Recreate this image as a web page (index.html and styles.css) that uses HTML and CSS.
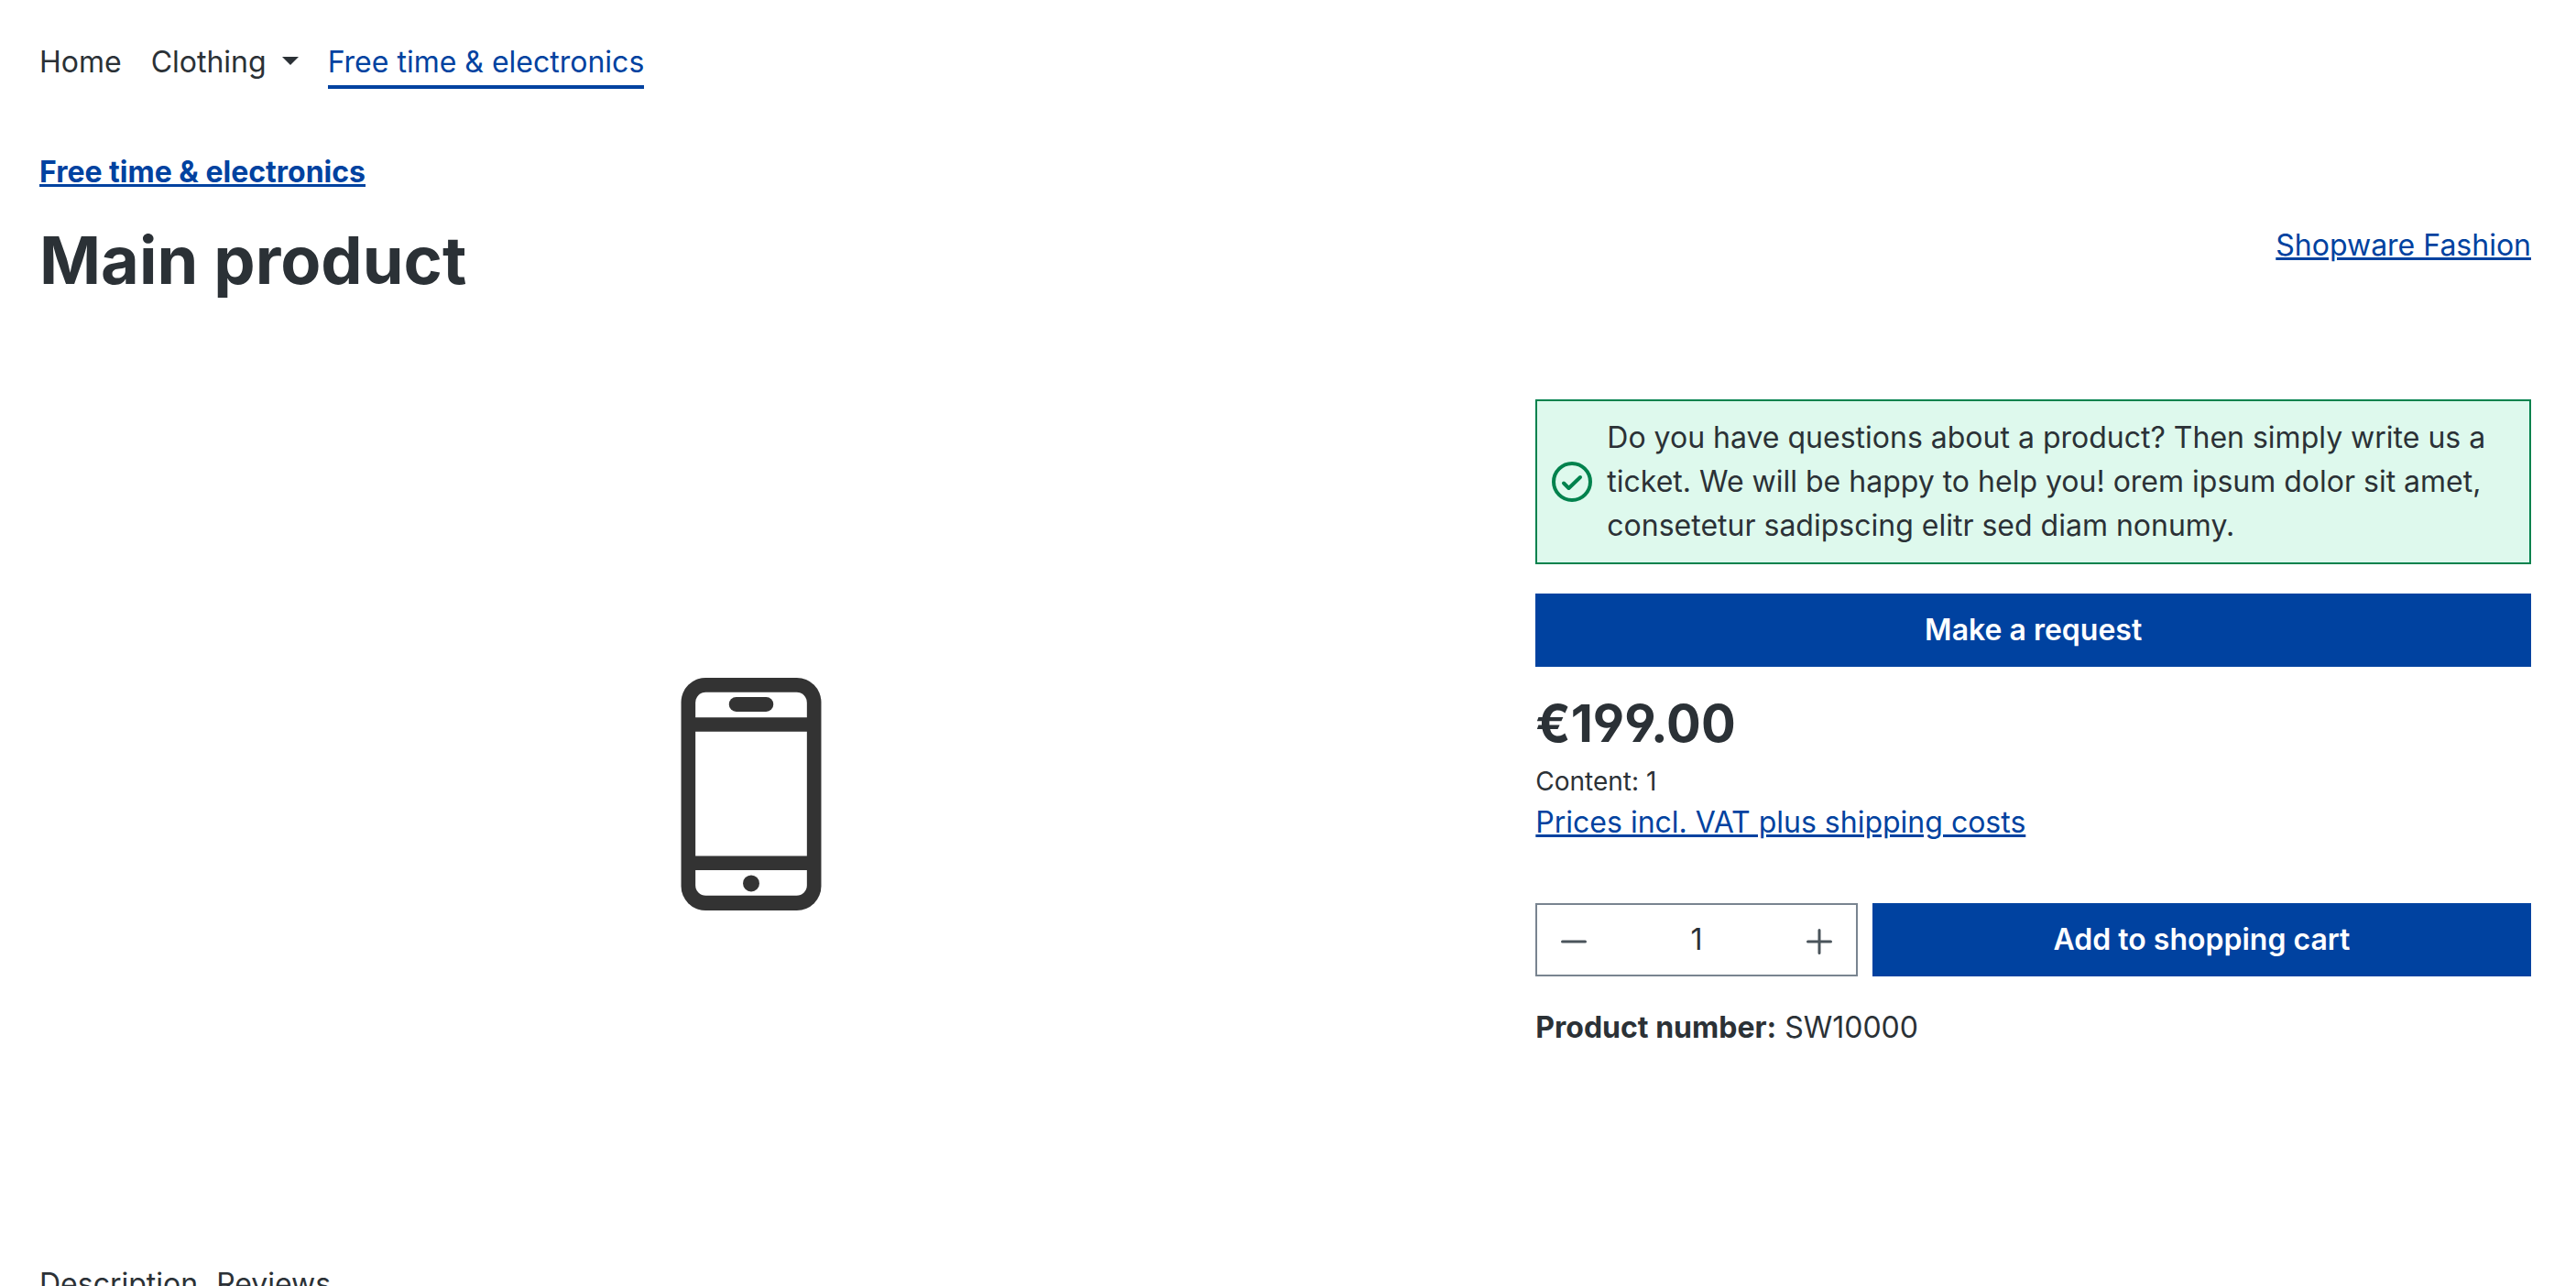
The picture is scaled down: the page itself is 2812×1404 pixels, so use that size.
FILE: index.html
```html
<!DOCTYPE html>
<html lang="en">
<head>
    <meta charset="UTF-8">
    <title>Main product</title>
    <link rel="stylesheet" href="styles.css">
</head>
<body>
<div class="container">
    <nav class="main-nav">
        <a class="nav-link" href="#">Home</a>
        <a class="nav-link" href="#">Clothing<span class="caret"></span></a>
        <a class="nav-link active" href="#">Free time &amp; electronics</a>
    </nav>

    <nav class="breadcrumb">
        <a href="#">Free time &amp; electronics</a>
    </nav>

    <div class="product-heading">
        <h1 class="product-name">Main product</h1>
        <a href="#">Shopware Fashion</a>
    </div>

    <div class="product-main">
        <div class="product-media">
            <svg class="product-image" viewBox="0 0 460 764" role="img" aria-label="Main product">
                <rect width="460" height="764" rx="80" fill="#333"/>
                <path fill="#fff" d="M47 130V81a34 34 0 0 1 34-34h298a34 34 0 0 1 34 34v49z"/>
                <path fill="#fff" d="M47 177h366v408H47z"/>
                <path fill="#fff" d="M47 632h366v49a34 34 0 0 1-34 34H81a34 34 0 0 1-34-34z"/>
                <rect x="157" y="63" width="146" height="48" rx="24" fill="#333"/>
                <circle cx="230" cy="675" r="27" fill="#333"/>
            </svg>
        </div>

        <div class="product-buy">
            <div class="alert" role="alert">
                <svg class="alert-icon" viewBox="0 0 44 44">
                    <circle cx="22" cy="22" r="20"/>
                    <path d="M13 23.500l5.500 5.500L31 17"/>
                </svg>
                <div>Do you have questions about a product? Then simply write us a ticket. We will be happy to help you! orem ipsum dolor sit amet, consetetur sadipscing elitr sed diam nonumy.</div>
            </div>
            <button type="button" class="btn btn-request">Make a request</button>

            <p class="price">€199.00</p>
            <div class="price-unit">Content: 1</div>
            <div class="tax"><a href="#">Prices incl. VAT plus shipping costs</a></div>

            <form class="buy-form">
                <div class="quantity">
                    <button type="button" class="quantity-btn" aria-label="Decrease quantity">
                        <svg viewBox="0 0 32 32"><path d="M3.500 18h25"/></svg>
                    </button>
                    <input class="quantity-input" type="text" value="1" aria-label="Quantity">
                    <button type="button" class="quantity-btn" aria-label="Increase quantity">
                        <svg viewBox="0 0 32 32"><path d="M3.500 18h25M16 5.500v25"/></svg>
                    </button>
                </div>
                <button type="button" class="btn btn-buy">Add to shopping cart</button>
            </form>

            <div class="product-number"><strong>Product number:</strong> SW10000</div>
        </div>
    </div>

    <div class="tabs">
        <a class="tab" href="#">Description</a>
        <a class="tab" href="#">Reviews</a>
    </div>
</div>
</body>
</html>
```
FILE: styles.css
```css
*
{
    box-sizing: border-box;
}
html
{
    height: 100%;
}
body
{
    height: 100%;
    margin: 0;
    overflow: hidden;
    background: #fff;
    color: #2b3136;
    font-family: Inter, "Liberation Sans", sans-serif;
    font-size: 32px;
    line-height: 48px;
}
a
{
    color: #0042a0;
}
button, input
{
    font: inherit;
    color: inherit;
}
.container
{
    padding: 44px 49px 0 43px;
}

/*---- navigation ----*/
.main-nav
{
    display: flex;
    gap: 32px;
}
.nav-link
{
    padding-bottom: 1px;
    border-bottom: 4px solid transparent;
    color: #2b3136;
    text-decoration: none;
}
.nav-link.active
{
    color: #0042a0;
    border-color: #0042a0;
}
.caret
{
    display: inline-block;
    margin-left: 17px;
    border: 9px solid transparent;
    border-top-color: #2b3136;
    border-bottom: 0;
    vertical-align: 8px;
}
.breadcrumb
{
    margin-top: 67px;
    font-weight: 700;
}

/*---- heading ----*/
.product-heading
{
    display: flex;
    justify-content: space-between;
    align-items: flex-start;
    margin-top: 32px;
}
.product-name
{
    margin: 0;
    font-size: 72px;
    line-height: 80px;
    font-weight: 700;
}

/*---- product ----*/
.product-main
{
    display: grid;
    grid-template-columns: repeat(12, 1fr);
    gap: 80px;
    margin-top: 112px;
}
.product-media
{
    grid-column: span 7;
    display: flex;
    align-items: center;
    justify-content: center;
    min-height: 862px;
}
.product-image
{
    width: 154px;
    height: 254px;
}
.product-buy
{
    grid-column: span 5;
}
.alert
{
    display: flex;
    align-items: center;
    gap: 16px;
    padding: 16px;
    border: 2px solid #00824d;
    background: #def9ed;
}
.alert-icon
{
    flex: none;
    width: 44px;
    height: 44px;
    fill: none;
    stroke: #00824d;
    stroke-width: 4;
    stroke-linecap: round;
    stroke-linejoin: round;
}
.btn
{
    height: 80px;
    padding: 0 24px;
    border: 0;
    background: #0042a0;
    color: #fff;
    font-weight: 600;
}
.btn-request
{
    display: block;
    width: 100%;
    margin-top: 32px;
}
.price
{
    margin: 20px 0 0;
    font-size: 56px;
    line-height: 84px;
    font-weight: 700;
    /* open nine */
    font-feature-settings: "cv04";
}
.price-unit
{
    font-size: 28px;
    line-height: 42px;
}
.buy-form
{
    display: grid;
    grid-template-columns: repeat(3, 1fr);
    gap: 16px;
    margin-top: 64px;
}
.btn-buy
{
    grid-column: span 2;
}
.quantity
{
    display: flex;
    min-width: 0;
    height: 80px;
    border: 2px solid #798490;
}
.quantity-btn
{
    display: flex;
    align-items: center;
    flex: none;
    padding: 0 24px;
    border: 0;
    background: none;
}
.quantity-btn svg
{
    width: 32px;
    height: 32px;
    fill: none;
    stroke: #4a545b;
    stroke-width: 3;
    stroke-linecap: round;
}
.quantity-input
{
    flex: 1;
    min-width: 0;
    padding: 0;
    border: 0;
    background: none;
    text-align: center;
}
.product-number
{
    margin-top: 32px;
}

/*---- tabs ----*/
.tabs
{
    display: flex;
    gap: 20px;
    margin-top: 80px;
}
.tab
{
    color: #2b3136;
    text-decoration: none;
}
```
